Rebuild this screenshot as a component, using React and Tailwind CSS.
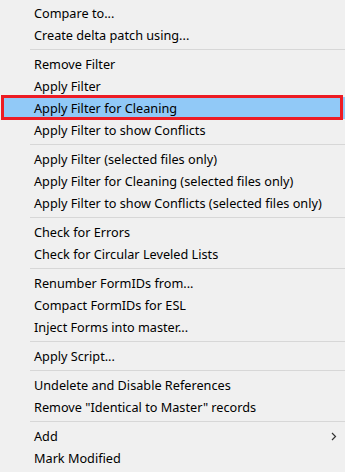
import React from "react";

const groups = [
  ["Compare to...", "Create delta patch using..."],
  ["Remove Filter", "Apply Filter", "Apply Filter for Cleaning", "Apply Filter to show Conflicts"],
  ["Apply Filter (selected files only)", "Apply Filter for Cleaning (selected files only)", "Apply Filter to show Conflicts (selected files only)"],
  ["Check for Errors", "Check for Circular Leveled Lists"],
  ["Renumber FormIDs from...", "Compact FormIDs for ESL", "Inject Forms into master..."],
  ["Apply Script..."],
  ["Undelete and Disable References", "Remove \"Identical to Master\" records"],
  ["Add", "Mark Modified"],
];

function Item({ label }) {
  const highlighted = label === "Apply Filter for Cleaning";
  const sub = label === "Add";
  return (
    <div className="relative h-[22px] flex items-center">
      {highlighted && <div className="absolute left-[2px] right-0 top-0 bottom-0 bg-[#91c9f7]" />}
      <span className="relative pl-[34px] text-[12.7px] leading-none text-black">{label}</span>
      {sub && (
        <svg className="absolute left-[331px] top-[7px]" width="6" height="9" viewBox="0 0 6 9">
          <polyline points="1,1 4.5,4.5 1,8" fill="none" stroke="#333" strokeWidth="1.2" />
        </svg>
      )}
      {highlighted && (
        <div className="absolute left-[1px] top-[-2px] w-[342px] h-[25px] border-[3px] border-[#ed1c24]" />
      )}
    </div>
  );
}

export default function App() {
  return (
    <div
      className="w-[345px] h-[472px] bg-[#f0f0f0] pt-[2px] overflow-hidden"
      style={{ fontFamily: '"Noto Sans", "Open Sans", sans-serif' }}
    >
      {groups.map((g, gi) => (
        <div key={gi}>
          {gi > 0 && (
            <div className="h-[7px] pt-[3px]">
              <div className="h-px ml-[30px] bg-[#d7d7d7]" />
            </div>
          )}
          {g.map((l) => (
            <Item key={l} label={l} />
          ))}
        </div>
      ))}
    </div>
  );
}
